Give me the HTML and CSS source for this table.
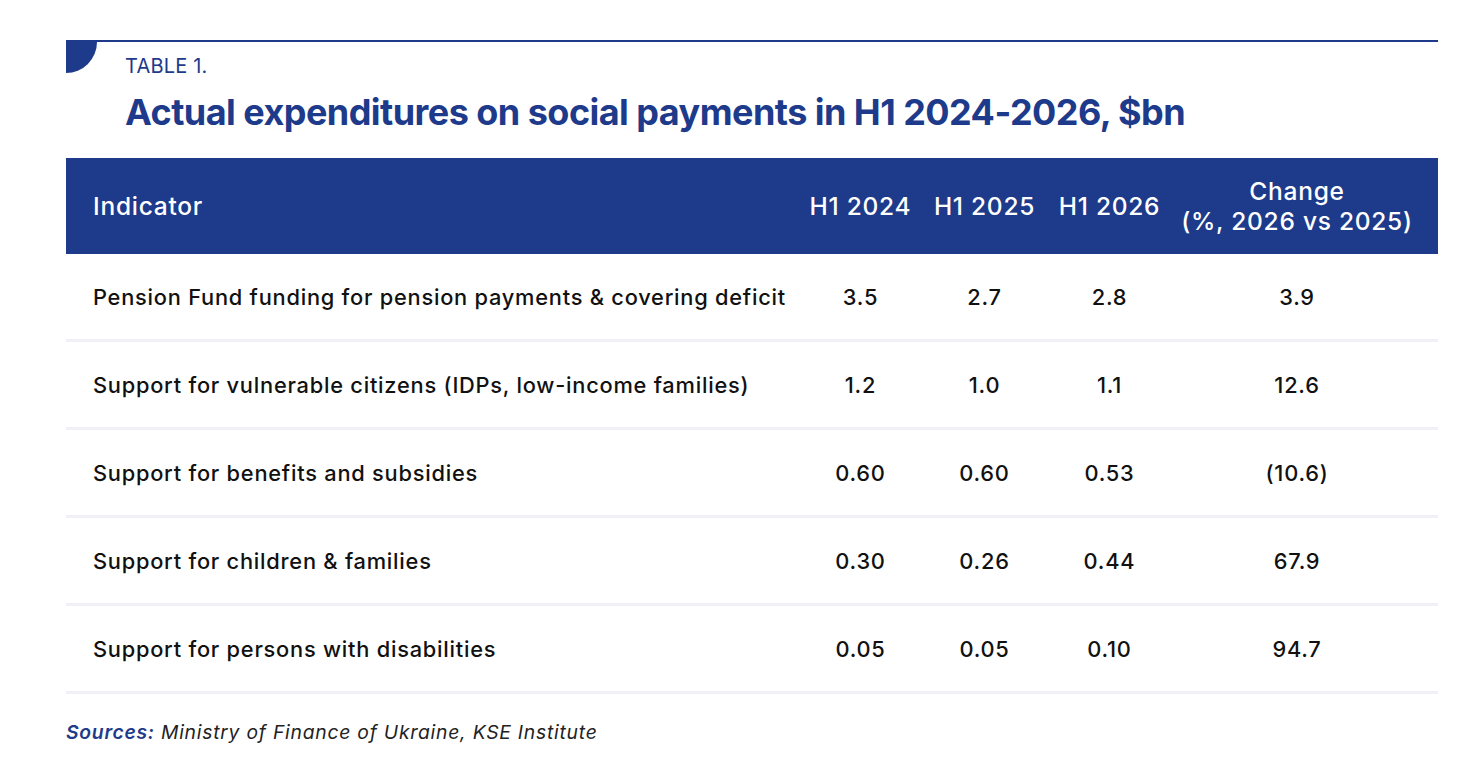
FILE: index.html
```html
<!DOCTYPE html>
<html lang="en">
<head>
<meta charset="utf-8">
<title>Table 1</title>
<link rel="stylesheet" href="styles.css">
</head>
<body>
<div class="page">
  <div class="heading">
    <div class="corner"></div>
    <div class="heading-text">
      <div class="label">TABLE 1.</div>
      <h1 class="title">Actual expenditures on social payments in H1 2024-2026, $bn</h1>
    </div>
  </div>
  <table class="data">
    <colgroup>
      <col class="c1"><col class="c2"><col class="c3"><col class="c4"><col class="c5">
    </colgroup>
    <thead>
      <tr>
        <th class="ind">Indicator</th>
        <th>H1 2024</th>
        <th>H1 2025</th>
        <th>H1 2026</th>
        <th class="chg">Change<br>(%, 2026 vs 2025)</th>
      </tr>
    </thead>
    <tbody>
      <tr><td class="ind">Pension Fund funding for pension payments &amp; covering deficit</td><td>3.5</td><td>2.7</td><td>2.8</td><td class="chg">3.9</td></tr>
      <tr><td class="ind">Support for vulnerable citizens (IDPs, low-income families)</td><td>1.2</td><td>1.0</td><td>1.1</td><td class="chg">12.6</td></tr>
      <tr><td class="ind">Support for benefits and subsidies</td><td>0.60</td><td>0.60</td><td>0.53</td><td class="chg">(10.6)</td></tr>
      <tr><td class="ind">Support for children &amp; families</td><td>0.30</td><td>0.26</td><td>0.44</td><td class="chg">67.9</td></tr>
      <tr><td class="ind">Support for persons with disabilities</td><td>0.05</td><td>0.05</td><td>0.10</td><td class="chg">94.7</td></tr>
    </tbody>
  </table>
  <p class="sources"><span class="src-label">Sources:</span> Ministry of Finance of Ukraine, KSE Institute</p>
</div>
</body>
</html>
```

FILE: styles.css
```css
html, body {
  margin: 0;
  padding: 0;
  background: #ffffff;
}
body {
  font-family: Inter, "Noto Sans", "Liberation Sans", sans-serif;
  color: #111111;
}
.page {
  padding: 40px 34px 0 66px;
  width: 1372px;
}
.heading {
  display: flex;
  border-top: 2px solid #1e3a8a;
  gap: 28px;
}
.corner {
  width: 31px;
  height: 31px;
  background: #1e3a8a;
  border-bottom-right-radius: 100%;
  flex: none;
}
.heading-text {
  padding-top: 12px;
}
.label {
  font-size: 20px;
  line-height: 24px;
  color: #1e3a8a;
  letter-spacing: 0.01em;
}
.title {
  margin: 13px 0 0;
  font-size: 36px;
  line-height: 42px;
  font-weight: 700;
  color: #1e3a8a;
  letter-spacing: -0.015em;
}
.data {
  margin-top: 25px;
  width: 1372px;
  border-collapse: collapse;
  table-layout: fixed;
}
.c1 { width: 733px; }
.c2 { width: 123px; }
.c3 { width: 125px; }
.c4 { width: 125px; }
.c5 { width: 266px; }
.data th {
  background: #1e3a8a;
  color: #ffffff;
  font-weight: 500;
  font-size: 24.5px;
  line-height: 30px;
  letter-spacing: 0.03em;
  height: 96px;
  padding: 0;
  text-align: center;
  white-space: nowrap;
}
.data td {
  height: 85px;
  padding: 0;
  font-size: 21.8px;
  font-weight: 500;
  letter-spacing: 0.035em;
  text-align: center;
  border-bottom: 3px solid #f0f0f6;
  white-space: nowrap;
}
.data .ind {
  text-align: left;
  padding-left: 27px;
}
.data .chg {
  padding-right: 16px;
}
.sources {
  margin: 26px 0 0;
  font-size: 19.3px;
  font-style: italic;
  letter-spacing: 0.04em;
  color: #222222;
}
.src-label {
  color: #1e3a8a;
  font-weight: 600;
}
```
